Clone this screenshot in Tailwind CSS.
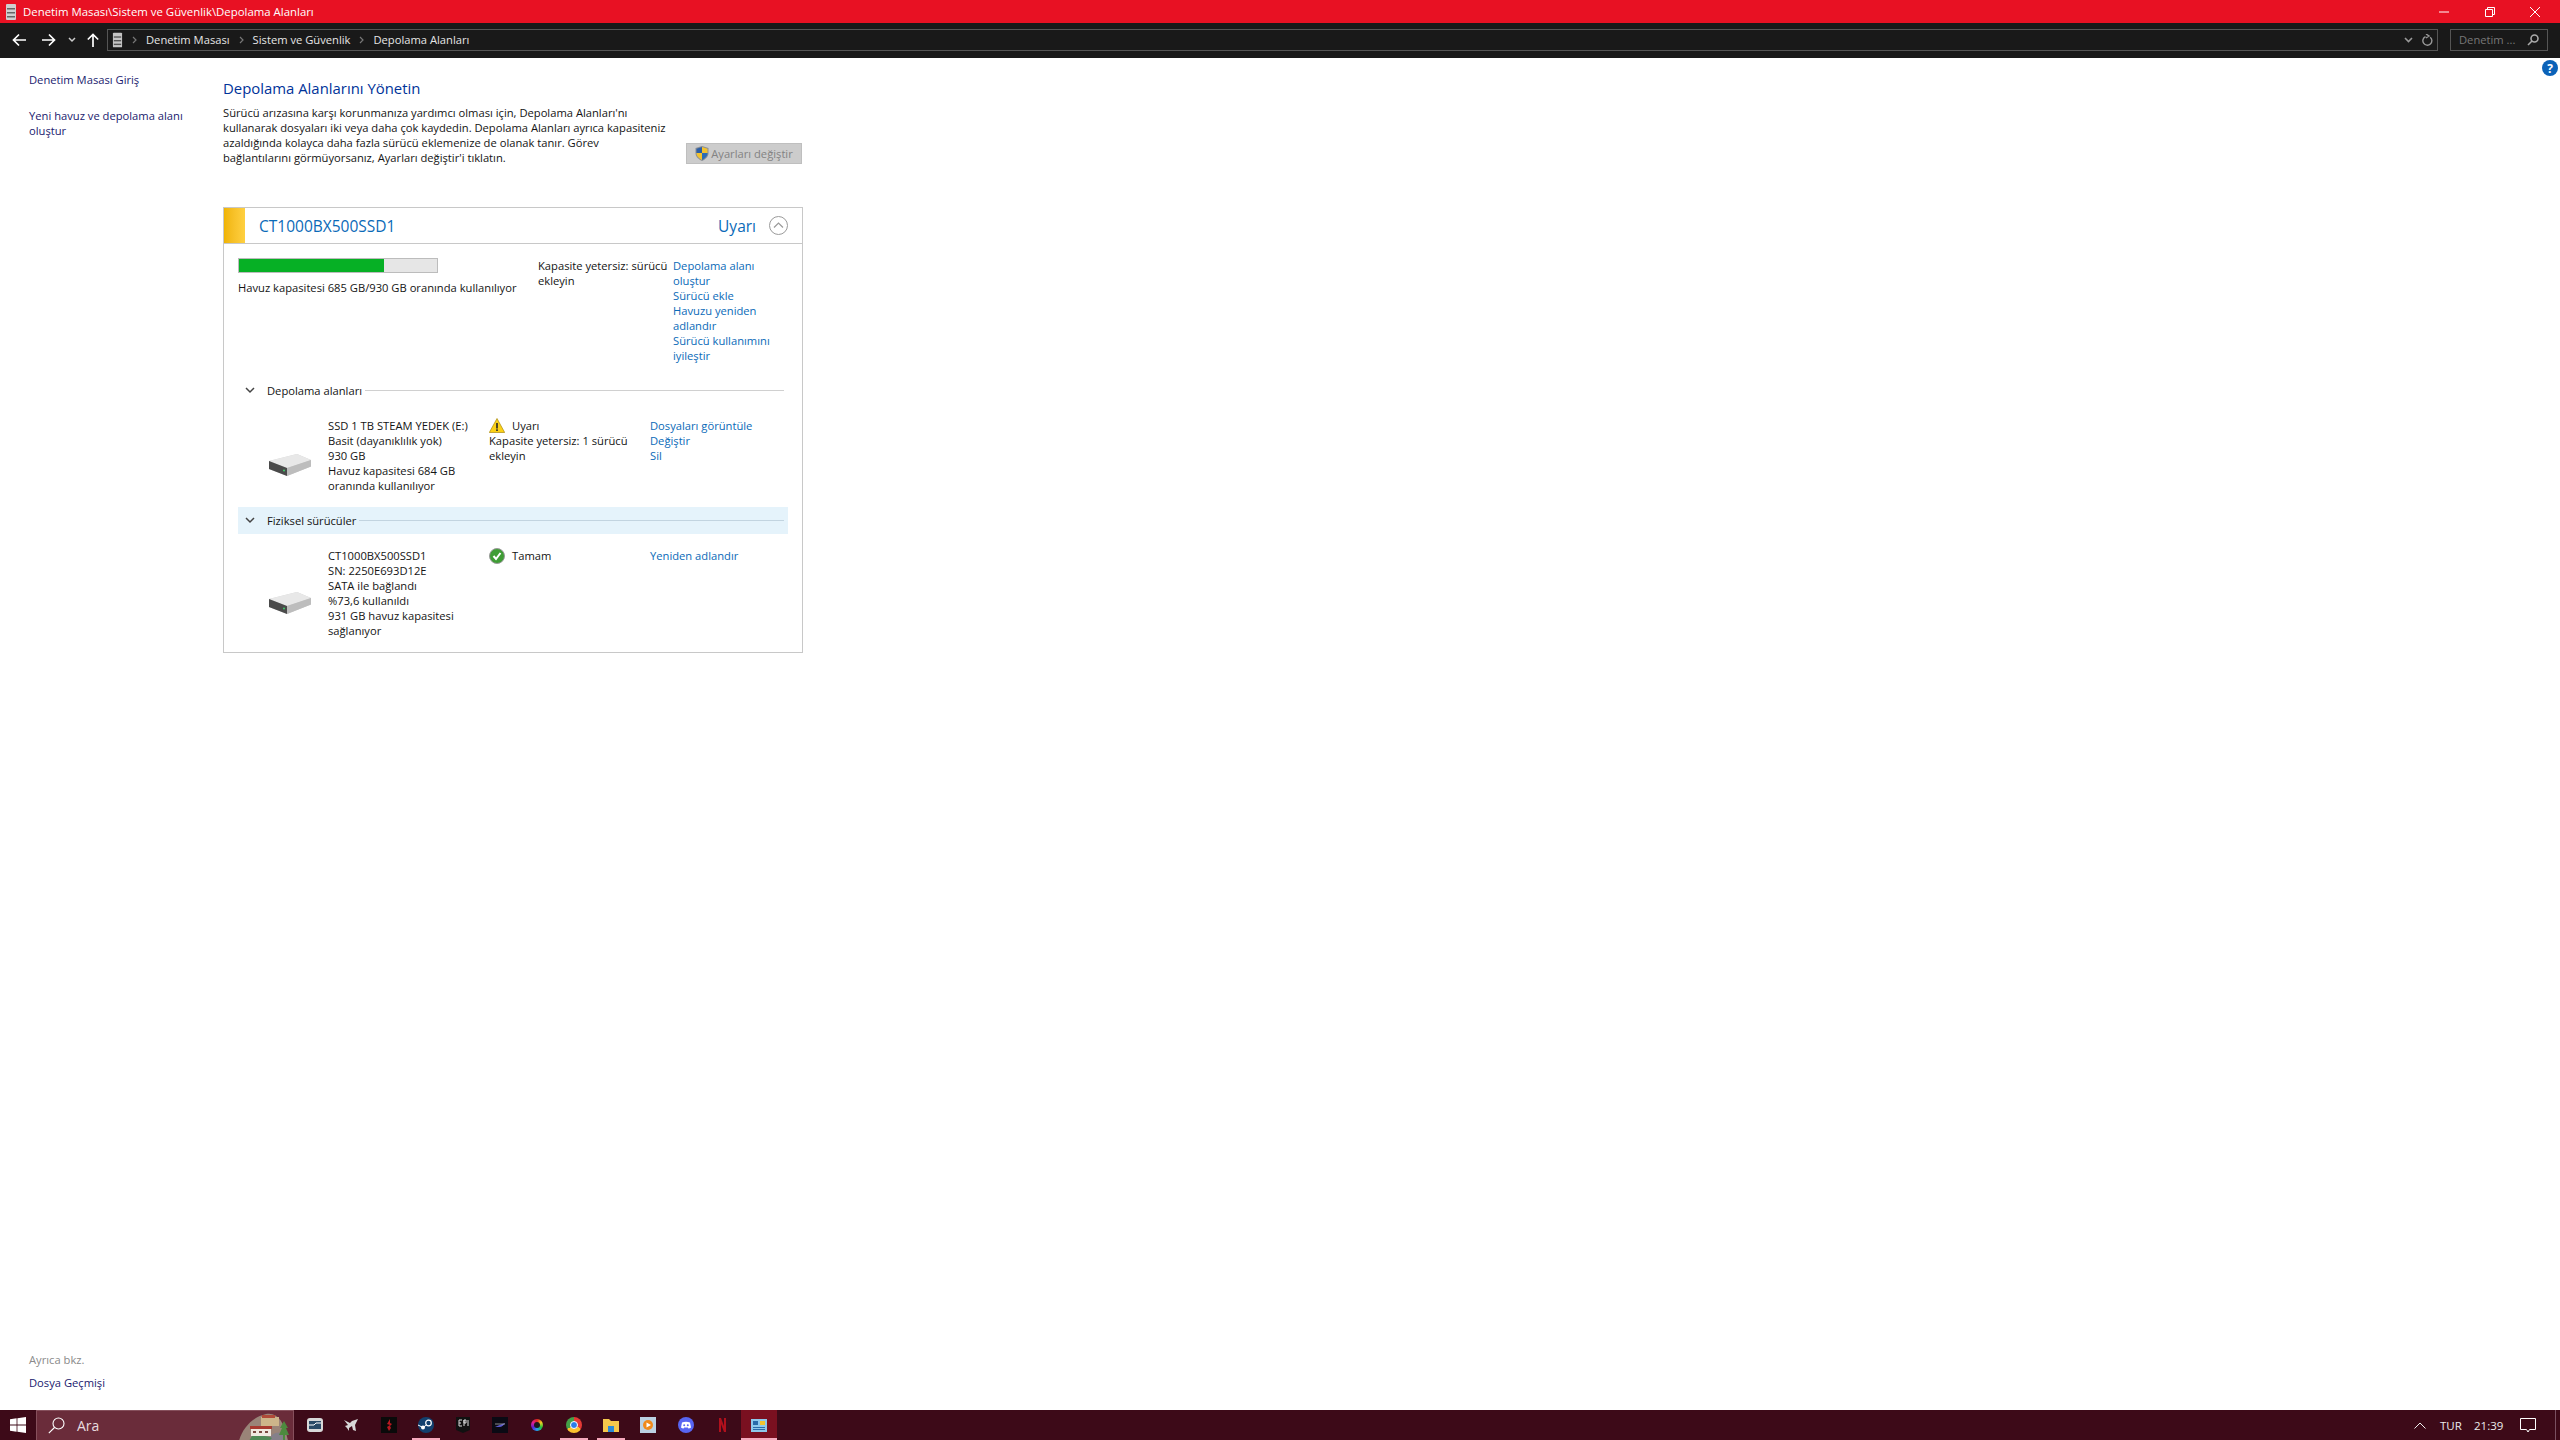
<!DOCTYPE html>
<html lang="tr">
<head>
<meta charset="utf-8">
<title>Depolama Alanları</title>
<script src="https://cdn.jsdelivr.net/npm/@tailwindcss/browser@4"></script>
</head>
<body class="bg-white">
<div class="w-[2560px] h-[1440px] flex flex-col overflow-hidden bg-white text-[11.2px] leading-[15px] text-[#141414] font-['Open_Sans',sans-serif]">

  <!-- title bar -->
  <div class="h-[23px] flex items-center bg-[#e81123] text-white shrink-0">
    <svg class="ml-[5px] w-[12px] h-[16px]" viewBox="0 0 12 16"><rect x="1" y="0" width="10" height="16" rx="1" fill="#cfcfcf"/><rect x="2" y="4" width="8" height="1.5" fill="#666"/><rect x="2" y="8" width="8" height="1.5" fill="#666"/><rect x="2" y="12" width="8" height="1.5" fill="#666"/></svg>
    <span class="ml-[6px] text-[11.4px]">Denetim Masası\Sistem ve Güvenlik\Depolama Alanları</span>
    <div class="ml-auto flex items-center h-full">
      <svg class="w-[10px] h-[10px] mr-[36px]" viewBox="0 0 10 10"><path d="M0 5h10" stroke="#fff" stroke-width="1"/></svg>
      <svg class="w-[10px] h-[10px] mr-[35px]" viewBox="0 0 10 10" fill="none" stroke="#fff"><path d="M0.5 2.5h7v7h-7zM2.5 2.5v-2h7v7h-2"/></svg>
      <svg class="w-[10px] h-[10px] mr-[20px]" viewBox="0 0 10 10" fill="none" stroke="#fff"><path d="M0 0l10 10M10 0l-10 10"/></svg>
    </div>
  </div>

  <!-- address bar -->
  <div class="h-[35px] pb-[1px] flex items-center bg-[#191919] text-[#e6e6e6] shrink-0">
    <svg class="ml-[12px] w-[14px] h-[14px]" viewBox="0 0 14 14" fill="none" stroke="#fff" stroke-width="1.7"><path d="M14 7H1.5M7 1.5L1.5 7 7 12.5"/></svg>
    <svg class="ml-[16px] w-[14px] h-[14px]" viewBox="0 0 14 14" fill="none" stroke="#fff" stroke-width="1.7"><path d="M0 7h12.5M7 1.5L12.5 7 7 12.5"/></svg>
    <svg class="ml-[12px] w-[8px] h-[6px]" viewBox="0 0 8 6" fill="none" stroke="#ccc" stroke-width="1.5"><path d="M1 1l3 3 3-3"/></svg>
    <svg class="ml-[11px] w-[12px] h-[14px]" viewBox="0 0 12 14" fill="none" stroke="#fff" stroke-width="1.7"><path d="M6 14V1.5M0.8 6.5L6 1.5l5.2 5"/></svg>
    <div class="ml-[8px] w-[2331px] h-[22px] pb-[1px] border border-[#555] flex items-center">
      <svg class="ml-[4px] w-[11px] h-[16px]" viewBox="0 0 12 16"><rect x="1" y="0" width="10" height="16" rx="1" fill="#c4c4c4"/><rect x="2" y="4" width="8" height="1.5" fill="#555"/><rect x="2" y="8" width="8" height="1.5" fill="#555"/><rect x="2" y="12" width="8" height="1.5" fill="#555"/></svg>
      <svg class="ml-[9px] w-[5px] h-[8px]" viewBox="0 0 5 8" fill="none" stroke="#777" stroke-width="1.2"><path d="M1 1l3 3-3 3"/></svg>
      <span class="ml-[9px]">Denetim Masası</span>
      <svg class="ml-[9px] w-[5px] h-[8px]" viewBox="0 0 5 8" fill="none" stroke="#777" stroke-width="1.2"><path d="M1 1l3 3-3 3"/></svg>
      <span class="ml-[9px]">Sistem ve Güvenlik</span>
      <svg class="ml-[9px] w-[5px] h-[8px]" viewBox="0 0 5 8" fill="none" stroke="#777" stroke-width="1.2"><path d="M1 1l3 3-3 3"/></svg>
      <span class="ml-[9px]">Depolama Alanları</span>
      <svg class="ml-auto w-[9px] h-[6px]" viewBox="0 0 9 6" fill="none" stroke="#999" stroke-width="1.6"><path d="M1 1l3.5 3.5L8 1"/></svg>
      <svg class="ml-[9px] mr-[4px] w-[11px] h-[12px]" viewBox="0 0 11 12" fill="none" stroke="#999" stroke-width="1.4"><path d="M8.2 3.2A4.5 4.5 0 1 1 3.5 2.6M4 0l3 2-3 2" /></svg>
    </div>
    <div class="ml-[12px] w-[98px] h-[22px] pb-[1px] border border-[#555] flex items-center text-[#777]">
      <span class="ml-[8px]">Denetim ...</span>
      <svg class="ml-auto mr-[8px] w-[12px] h-[12px]" viewBox="0 0 12 12" fill="none" stroke="#aaa" stroke-width="1.6"><circle cx="7.5" cy="4.5" r="3.5"/><path d="M5 7l-4 4"/></svg>
    </div>
  </div>

  <!-- content -->
  <div class="flex-1 flex min-h-0 relative">
    <svg class="absolute right-[2px] top-[2px] w-[16px] h-[16px]" viewBox="0 0 16 16"><circle cx="8" cy="8" r="8" fill="#0b62b8"/><text x="8" y="12.5" text-anchor="middle" fill="#fff" font-size="12" font-weight="700" font-family="Open Sans">?</text></svg>

    <aside class="w-[223px] shrink-0 pl-[29px] pt-[14px] pb-[20px] flex flex-col justify-between text-[#1a1a6e]">
      <div class="flex flex-col gap-[21px]">
        <span>Denetim Masası Giriş</span>
        <span>Yeni havuz ve depolama alanı<br>oluştur</span>
      </div>
      <div class="flex flex-col gap-[8px]">
        <span class="text-[#8a8a8a]">Ayrıca bkz.</span>
        <span>Dosya Geçmişi</span>
      </div>
    </aside>

    <main class="flex-1 pt-[20px]">
      <h1 class="text-[14.9px] leading-[20px] font-normal text-[#003399]">Depolama Alanlarını Yönetin</h1>
      <div class="mt-[7px] w-[580px] flex items-end justify-between">
        <p class="whitespace-nowrap">Sürücü arızasına karşı korunmanıza yardımcı olması için, Depolama Alanları'nı<br>kullanarak dosyaları iki veya daha çok kaydedin. Depolama Alanları ayrıca kapasiteniz<br>azaldığında kolayca daha fazla sürücü eklemenize de olanak tanır. Görev<br>bağlantılarını görmüyorsanız, Ayarları değiştir'i tıklatın.</p>
        <div class="w-[116px] h-[21px] mb-[1px] mr-[1px] flex items-center justify-center gap-[2px] bg-[#cccccc] border border-[#bfbfbf] text-[#838383]">
          <svg class="w-[14px] h-[15px]" viewBox="0 0 14 15"><path d="M7 0l6.500 2v5c0 4-3.500 6.500-6.500 8-3-1.500-6.500-4-6.500-8V2z" fill="#8a8f96"/><path d="M7 1L1.500 2.700V7H7z" fill="#2d5fa5"/><path d="M7 1l5.500 1.700V7H7z" fill="#f2c230"/><path d="M1.500 7H7v7c-2.500-1.300-5.500-3.500-5.500-7z" fill="#f2c230"/><path d="M12.500 7H7v7c2.500-1.300 5.500-3.500 5.500-7z" fill="#2d6db5"/></svg>
          <span>Ayarları değiştir</span>
        </div>
      </div>

      <!-- card -->
      <section class="mt-[42px] w-[580px] h-[446px] border border-[#c8c8c8]">
        <header class="h-[36px] flex items-center border-b border-[#c8c8c8]">
          <div class="w-[21px] h-full bg-gradient-to-r from-[#f0b400] to-[#ffd040]"></div>
          <span class="ml-[14px] pt-[1px] text-[15.5px] text-[#0a6ab8]">CT1000BX500SSD1</span>
          <span class="ml-auto pt-[1px] text-[15.5px] text-[#0a6ab8]">Uyarı</span>
          <svg class="ml-[13px] mr-[14px] w-[19px] h-[19px]" viewBox="0 0 19 19" fill="none"><circle cx="9.500" cy="9.500" r="9" stroke="#9a9a9a"/><path d="M5 11.500l4.500-4.500 4.500 4.500" stroke="#9a9a9a" stroke-width="1.200"/></svg>
        </header>

        <div class="pt-[14px] pl-[14px] flex">
          <div class="w-[300px]">
            <div class="w-[200px] h-[15px] bg-[#e6e6e6] border border-[#bcbcbc]">
              <div class="h-full bg-[#06b025]" style="width:73%"></div>
            </div>
            <div class="mt-[7px] whitespace-nowrap">Havuz kapasitesi 685 GB/930 GB oranında kullanılıyor</div>
          </div>
          <div class="w-[135px] whitespace-nowrap">Kapasite yetersiz: sürücü<br>ekleyin</div>
          <div class="text-[#0a6ab8] whitespace-nowrap">Depolama alanı<br>oluştur<br>Sürücü ekle<br>Havuzu yeniden<br>adlandır<br>Sürücü kullanımını<br>iyileştir</div>
        </div>

        <div class="mt-[14px] ml-[14px] w-[550px] h-[27px] flex items-center pl-[7px] pr-[4px]">
          <svg class="w-[10px] h-[7px]" viewBox="0 0 10 7" fill="none" stroke="#444" stroke-width="1.500"><path d="M1 1l4 4 4-4"/></svg>
          <span class="ml-[12px]">Depolama alanları</span>
          <div class="ml-[3px] flex-1 h-px bg-[#d0d0d0]"></div>
        </div>

        <div class="h-[103px] pl-[45px] pt-[14px] flex">
          <svg class="mt-[36px] w-[43px] h-[22px]" viewBox="0 0 43 22"><path d="M0 7L28 0l14 6v6.500L18 22 0 15z" fill="#cfcfcf"/><path d="M0 7l28-7 14 6-24 8z" fill="#e8e8e8"/><path d="M0 7l18 7v8L0 15z" fill="#4a4a4a"/><path d="M18 14l24-8v6.500L18 22z" fill="#bdbdbd"/><circle cx="15" cy="16.500" r="1" fill="#3fd06a"/></svg>
          <div class="ml-[16px] w-[161px] whitespace-nowrap">SSD 1 TB STEAM YEDEK (E:)<br>Basit (dayanıklılık yok)<br>930 GB<br>Havuz kapasitesi 684 GB<br>oranında kullanılıyor</div>
          <div class="w-[161px] whitespace-nowrap">
            <div class="flex items-center gap-[7px]">
              <svg class="w-[16px] h-[15px]" viewBox="0 0 16 15"><path d="M8 0.500L15.700 14.500H0.300z" fill="#fcd116" stroke="#a98a10" stroke-width="0.700"/><rect x="7.200" y="5" width="1.600" height="5.500" fill="#222"/><rect x="7.200" y="11.300" width="1.600" height="1.700" fill="#222"/></svg>
              <span>Uyarı</span>
            </div>
            Kapasite yetersiz: 1 sürücü<br>ekleyin
          </div>
          <div class="text-[#0a6ab8] whitespace-nowrap">Dosyaları görüntüle<br>Değiştir<br>Sil</div>
        </div>

        <div class="ml-[14px] w-[550px] h-[27px] flex items-center pl-[7px] pr-[4px] bg-[#e5f3fb]">
          <svg class="w-[10px] h-[7px]" viewBox="0 0 10 7" fill="none" stroke="#444" stroke-width="1.500"><path d="M1 1l4 4 4-4"/></svg>
          <span class="ml-[12px]">Fiziksel sürücüler</span>
          <div class="ml-[3px] flex-1 h-px bg-[#c2d4e0]"></div>
        </div>

        <div class="pl-[45px] pt-[14px] flex">
          <svg class="mt-[44px] w-[43px] h-[22px]" viewBox="0 0 43 22"><path d="M0 7L28 0l14 6v6.500L18 22 0 15z" fill="#cfcfcf"/><path d="M0 7l28-7 14 6-24 8z" fill="#e8e8e8"/><path d="M0 7l18 7v8L0 15z" fill="#4a4a4a"/><path d="M18 14l24-8v6.500L18 22z" fill="#bdbdbd"/><circle cx="15" cy="16.500" r="1" fill="#3fd06a"/></svg>
          <div class="ml-[16px] w-[161px] whitespace-nowrap">CT1000BX500SSD1<br>SN: 2250E693D12E<br>SATA ile bağlandı<br>%73,6 kullanıldı<br>931 GB havuz kapasitesi<br>sağlanıyor</div>
          <div class="w-[161px] flex items-start gap-[7px]">
            <svg class="w-[16px] h-[16px]" viewBox="0 0 16 16"><circle cx="8" cy="8" r="7.500" fill="#3f9d35" stroke="#9a9a9a" stroke-width="1"/><path d="M4.500 8l2.500 3 4.500-6" fill="none" stroke="#fff" stroke-width="2"/></svg>
            <span>Tamam</span>
          </div>
          <div class="text-[#0a6ab8] whitespace-nowrap">Yeniden adlandır</div>
        </div>
      </section>
    </main>
  </div>

  <!-- taskbar -->
  <footer class="h-[30px] shrink-0 flex items-center bg-[#3d0a18] text-white">
    <div class="w-[36px] h-full flex items-center justify-center">
      <svg class="w-[16px] h-[16px]" viewBox="0 0 16 16" fill="#fff"><path d="M0 2.300L6.600 1.300v6.300H0zM7.400 1.200L16 0v7.600H7.400zM0 8.400h6.600v6.300L0 13.700zM7.400 8.400H16V16l-8.600-1.200z"/></svg>
    </div>
    <div class="w-[258px] h-full flex items-center bg-[#6a2c3a] border-x border-t border-[#86505c] overflow-hidden">
      <svg class="ml-[11px] w-[17px] h-[17px]" viewBox="0 0 17 17" fill="none" stroke="#fff" stroke-width="1.100"><circle cx="10.500" cy="6.500" r="5.500"/><path d="M6.500 10.500L0.800 16.200"/></svg>
      <span class="ml-[12px] text-[14px] text-[#e8dcdf]">Ara</span>
      <svg class="ml-auto w-[55px] h-[30px]" viewBox="0 0 55 30"><path d="M1 30C4 18 14 6 28 3c12-2 18 8 22 27z" fill="#9a8478"/><path d="M30 30c2-6 8-10 14-8l5 8z" fill="#85808a"/><path d="M14 25c6 0 14-1 20 2l-3 3H11z" fill="#4f8a55"/><path d="M23 6h18v9H23z" fill="#cdb58a"/><path d="M24 4h13v3H24z" fill="#b04a38"/><path d="M13 17h20v8H13z" fill="#efe9df"/><path d="M12 15h22v3H12z" fill="#a83a30"/><path d="M15 20h3v2h-3zM21 20h3v2h-3zM27 20h3v2h-3z" fill="#7a4a40"/><path d="M46 10l-4 7h2l-3 7h4v6h2v-6h4l-3-7h2z" fill="#4d8a3e"/></svg>
    </div>
    <div class="flex items-center h-full pl-[2px]">
      <div class="w-[37px] h-full flex items-center justify-center"><svg class="w-[16px] h-[14px]" viewBox="0 0 16 14"><rect width="16" height="14" rx="3" fill="#d8d8d8"/><rect x="2" y="3" width="12" height="8" fill="#2a4a66"/><path d="M2 7h5l2-2h5" stroke="#fff" fill="none"/></svg></div>
      <div class="w-[37px] h-full flex items-center justify-center"><svg class="w-[15px] h-[13px]" viewBox="0 0 15 13" fill="#d8d8d8"><path d="M0 1l6 3 2-2 6-2-3 6 1 6-3-1-1-4-3 2v3L3 9 1 7l3-1z"/></svg></div>
      <div class="w-[37px] h-full flex items-center justify-center"><svg class="w-[16px] h-[16px]" viewBox="0 0 16 16"><rect width="16" height="16" fill="#0a0a0a"/><path d="M9 2L6 7l3 1-3 2 2 4 2-3-1-2 2-2-2-1z" fill="#b81820"/></svg></div>
      <div class="w-[38px] h-full relative flex items-center justify-center"><svg class="w-[16px] h-[16px]" viewBox="0 0 16 16"><circle cx="8" cy="8" r="8" fill="#12406e"/><circle cx="10.500" cy="6" r="2.800" fill="none" stroke="#fff" stroke-width="1.200"/><circle cx="5" cy="10.500" r="2" fill="#fff"/><path d="M0 8l5 2.500 4-3" stroke="#fff" fill="none"/></svg><span class="absolute bottom-0 left-[5px] w-[28px] h-[2px] bg-[#f5a9bc]"></span></div>
      <div class="w-[36px] h-full flex items-center justify-center"><svg class="w-[14px] h-[16px]" viewBox="0 0 14 16"><path d="M0 0h14v13l-7 3-7-3z" fill="#111"/><path d="M3 3h3M3 3v6h3M3 6h2M8 3h2v3H8zM8 3v6M12 3v6" stroke="#ddd" fill="none" stroke-width="1"/></svg></div>
      <div class="w-[37px] h-full flex items-center justify-center"><svg class="w-[16px] h-[16px]" viewBox="0 0 16 16"><rect width="16" height="16" fill="#0a0a14"/><path d="M3 10c3-1 6-3 10-4-1 2-3 4-6 4z" fill="#5a5ad0"/><path d="M3 7h10" stroke="#aaa" stroke-width="0.800"/></svg></div>
      <div class="w-[37px] h-full flex items-center justify-center"><div class="w-[12px] h-[12px] rounded-full bg-[conic-gradient(#e02020,#f0d020,#20c040,#20a0f0,#6020d0,#e02090,#e02020)] p-[3px]"><div class="w-full h-full rounded-full bg-[#1a1a1a]"></div></div></div>
      <div class="w-[38px] h-full relative flex items-center justify-center"><div class="w-[16px] h-[16px] rounded-full bg-[conic-gradient(#e53935_0_33%,#fbc02d_33%_66%,#43a047_66%_100%)] p-[4px]"><div class="w-full h-full rounded-full bg-[#2b7de9] border border-white"></div></div><span class="absolute bottom-0 left-[5px] w-[28px] h-[2px] bg-[#f5a9bc]"></span></div>
      <div class="w-[36px] h-full relative flex items-center justify-center"><svg class="w-[16px] h-[13px]" viewBox="0 0 16 13"><path d="M0 0h6l2 2h8v11H0z" fill="#f5c84c"/><rect x="5" y="7" width="6" height="6" fill="#2a8ad8"/></svg><span class="absolute bottom-0 left-[4px] w-[28px] h-[2px] bg-[#f5a9bc]"></span></div>
      <div class="w-[38px] h-full flex items-center justify-center"><svg class="w-[16px] h-[16px]" viewBox="0 0 16 16"><rect width="16" height="16" fill="#bcd2e4"/><circle cx="8" cy="8" r="5" fill="#f08a1c"/><path d="M6.500 5.500L11 8l-4.500 2.500z" fill="#fff"/></svg></div>
      <div class="w-[37px] h-full flex items-center justify-center"><svg class="w-[16px] h-[16px]" viewBox="0 0 16 16"><circle cx="8" cy="8" r="8" fill="#5865f2"/><path d="M4 5.500c2.500-1 5.500-1 8 0l1 5c-1 .8-2 1-2.500 1l-.7-1H6.200l-.7 1c-.5 0-1.500-.2-2.500-1z" fill="#fff"/><circle cx="6.200" cy="8.200" r="1" fill="#5865f2"/><circle cx="9.800" cy="8.200" r="1" fill="#5865f2"/></svg></div>
      <div class="w-[37px] h-full flex items-center justify-center"><svg class="w-[7px] h-[14px]" viewBox="0 0 7 14" fill="#b0101c"><path d="M0 0h2l3 8V0h2v14H5L2 6v8H0z"/></svg></div>
      <div class="w-[36px] h-full relative flex items-center justify-center bg-[#7a1020]"><svg class="w-[16px] h-[13px]" viewBox="0 0 16 13"><rect width="16" height="13" fill="#8fc8ea"/><rect x="2" y="2" width="5" height="4" fill="#2a6aa8"/><rect x="9" y="2" width="5" height="4" fill="#f2c230"/><path d="M2 8.500h12M2 10.500h12" stroke="#2a6aa8"/></svg><span class="absolute bottom-0 left-0 w-full h-[2px] bg-[#f5a9bc]"></span></div>
    </div>
    <div class="ml-auto flex items-center h-full text-[11.5px] text-[#ececec]">
      <svg class="w-[12px] h-[7px]" viewBox="0 0 12 7" fill="none" stroke="#eee" stroke-width="1"><path d="M0.500 6.500L6 1l5.500 5.500"/></svg>
      <span class="ml-[14px] w-[20px]">TUR</span>
      <span class="ml-[14px] w-[27px]">21:39</span>
      <svg class="ml-[19px] w-[16px] h-[15px]" viewBox="0 0 16 15" fill="none" stroke="#fff"><path d="M0.500 0.500h15v11H9.500L8 14l-1.500-2.500H0.500z"/></svg>
      <div class="ml-[19px] mr-[4px] w-px h-full bg-[#7a5060]"></div>
    </div>
  </footer>
</div>
</body>
</html>
